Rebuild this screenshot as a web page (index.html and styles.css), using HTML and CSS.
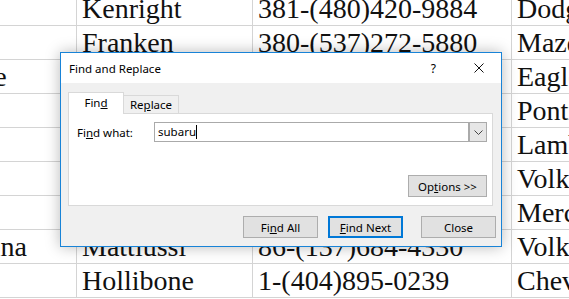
FILE: index.html
```html
<!DOCTYPE html>
<html lang="en">
  <head>
    <meta charset="UTF-8" />
    <title>Find and Replace</title>
    <link rel="stylesheet" href="styles.css">
  </head>
  <body>
    <table class="sheet">
      <colgroup>
        <col class="c1" /><col class="c2" /><col class="c3" /><col class="c4" />
      </colgroup>
      <tr><td></td><td>Kenright</td><td>381-(480)420-9884</td><td>Dodge</td></tr>
      <tr><td></td><td>Franken</td><td>380-(537)272-5880</td><td>Mazda</td></tr>
      <tr><td>Katie</td><td>Glossop</td><td>62-(221)384-1120</td><td>Eagle</td></tr>
      <tr><td></td><td>Bellord</td><td>7-(713)550-2041</td><td>Pontiac</td></tr>
      <tr><td></td><td>Dunkley</td><td>86-(512)901-7730</td><td>Lamborghini</td></tr>
      <tr><td></td><td>Pietri</td><td>55-(318)226-4410</td><td>Volkswagen</td></tr>
      <tr><td></td><td>Ashby</td><td>1-(212)667-0912</td><td>Mercedes</td></tr>
      <tr><td>Marina</td><td>Mattiussi</td><td>86-(137)684-4330</td><td>Volkswagen</td></tr>
      <tr><td></td><td>Hollibone</td><td>1-(404)895-0239</td><td>Chevrolet</td></tr>
    </table>

    <div class="dialog">
      <div class="titlebar">
        <span class="title">Find and Replace</span>
        <span class="help">?</span>
        <svg class="close-x" width="10" height="10" viewBox="0 0 10 10">
          <path d="M0.5 0.5 L9.5 9.5 M9.5 0.5 L0.5 9.5" stroke="#111" stroke-width="1" fill="none" />
        </svg>
      </div>
      <div class="body">
        <div class="tabs">
          <div class="tab active">Fin<u>d</u></div>
          <div class="tab">Re<u>p</u>lace</div>
        </div>
        <div class="panel">
          <div class="row">
            <label class="label">Fi<u>n</u>d what:</label>
            <div class="combo">
              <span class="value">subaru<span class="caret"></span></span>
              <span class="drop">
                <svg width="9" height="5" viewBox="0 0 9 5">
                  <path d="M0.5 0.5 L4.5 4.5 L8.5 0.5" stroke="#444" stroke-width="1" fill="none" />
                </svg>
              </span>
            </div>
          </div>
          <div class="options">
            <button class="btn">Op<u>t</u>ions &gt;&gt;</button>
          </div>
        </div>
        <div class="actions">
          <button class="btn find-all">Fi<u>n</u>d All</button>
          <button class="btn default"><u>F</u>ind Next</button>
          <button class="btn">Close</button>
        </div>
      </div>
    </div>
  </body>
</html>
```

FILE: styles.css
```css
html,
body {
  margin: 0;
  overflow: hidden;
  background: #fff;
}
body {
  position: relative;
  width: 569px;
  height: 299px;
}
.sheet {
  table-layout: fixed;
  width: 629px;
  border-collapse: collapse;
  margin-left: -60px;
  margin-top: -9px;
  font-family: "Liberation Serif", serif;
  font-size: 28px;
  color: #111;
}
.c1 {
  width: 136px;
}
.c2 {
  width: 176px;
}
.c3 {
  width: 259px;
}
.c4 {
  width: 58px;
}
.sheet td {
  height: 33px;
  padding: 0 0 0 5px;
  border: 1px solid #d4d4d4;
  white-space: nowrap;
  overflow: hidden;
  vertical-align: middle;
  line-height: 33px;
}

.dialog {
  position: absolute;
  left: 60px;
  top: 52px;
  width: 440px;
  border: 1px solid #1883d7;
  background: #f0f0f0;
  box-shadow: 0 0 14px rgba(0, 0, 0, 0.28);
  font-family: "Noto Sans", sans-serif;
  font-size: 11.5px;
  color: #000;
}
.titlebar {
  height: 30px;
  background: #fff;
  display: flex;
  align-items: center;
  padding-left: 8px;
}
.title {
  flex: 1;
}
.help {
  margin-right: 38px;
  font-size: 12px;
}
.close-x {
  margin-right: 17px;
}
.body {
  padding: 9px 5px 8px 7px;
}
.tabs {
  display: flex;
  align-items: flex-end;
  height: 21px;
}
.tab {
  width: 54px;
  height: 17px;
  line-height: 17px;
  text-align: center;
  border: 1px solid #d9d9d9;
  border-bottom: none;
  margin-left: -1px;
}
.tab.active {
  margin-left: 0;
  height: 21px;
  line-height: 20px;
  background: #fff;
  position: relative;
  z-index: 1;
  margin-bottom: -1px;
}
.panel {
  width: 425px;
  height: 93px;
  box-sizing: border-box;
  background: #fff;
  border: 1px solid #d9d9d9;
  margin-bottom: 10px;
  display: flex;
  flex-direction: column;
  justify-content: space-between;
  padding: 8px 5px 8px 8px;
}
.row {
  display: flex;
  align-items: center;
}
.label {
  width: 77px;
}
.combo {
  flex: 1;
  height: 20px;
  border: 1px solid #aaa;
  box-sizing: border-box;
  display: flex;
  align-items: stretch;
}
.value {
  flex: 1;
  padding-left: 3px;
  line-height: 18px;
}
.caret {
  display: inline-block;
  width: 1px;
  height: 14px;
  background: #000;
  vertical-align: -3px;
}
.drop {
  width: 16px;
  background: #e6e6e6;
  border-left: 2px solid #aaa;
  display: flex;
  align-items: center;
  justify-content: center;
}
.options {
  display: flex;
  justify-content: flex-end;
}
.btn {
  width: 79px;
  height: 22px;
  background: #e1e1e1;
  border: 1px solid #adadad;
  font-family: "Noto Sans", sans-serif;
  font-size: 11.5px;
  color: #000;
  padding: 0;
}
.actions {
  display: flex;
  justify-content: flex-end;
}
.actions .btn {
  width: 75px;
}
.actions .find-all {
  margin-right: 10px;
}
.btn.default {
  border: 2px solid #0078d7;
  margin-right: 18px;
}
```
